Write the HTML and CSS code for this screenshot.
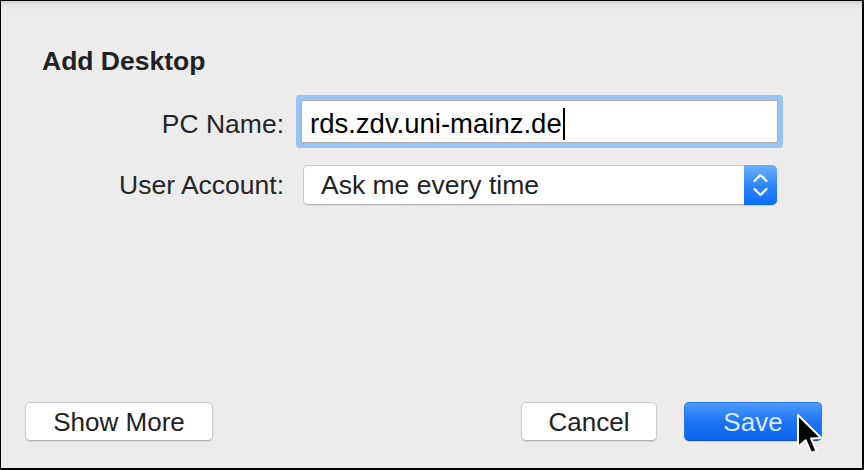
FILE: index.html
```html
<!DOCTYPE html>
<html lang="en">
<head>
    <meta charset="UTF-8">
    <title>Add Desktop</title>
    <link rel="stylesheet" href="styles.css">
</head>
<body>
    <div class="window">
        <h1 class="title">Add Desktop</h1>

        <div class="row row-name">
            <label class="label">PC Name:</label>
            <div class="field">rds.zdv.uni-mainz.de<span class="caret"></span></div>
        </div>

        <div class="row row-account">
            <label class="label">User Account:</label>
            <div class="select">
                <span class="select-text">Ask me every time</span>
                <span class="select-arrows">
                    <svg width="15" height="26" viewBox="0 0 15 26">
                        <path d="M1.5 9 L7.5 3 L13.5 9" fill="none" stroke="#fff" stroke-width="2.2" stroke-linecap="round" stroke-linejoin="round"/>
                        <path d="M1.5 17 L7.5 23 L13.5 17" fill="none" stroke="#fff" stroke-width="2.2" stroke-linecap="round" stroke-linejoin="round"/>
                    </svg>
                </span>
            </div>
        </div>

        <div class="footer">
            <button class="btn btn-more">Show More</button>
            <div class="spacer"></div>
            <button class="btn btn-cancel">Cancel</button>
            <button class="btn btn-save">Save</button>
        </div>

        <!-- mouse pointer over the Save button -->
        <svg class="pointer" width="28" height="42" viewBox="-1 -1 14 21">
            <path d="M0 0 L0 16 L3.8 12.6 L6.6 19 L9.2 17.9 L6.5 11.7 L11.6 11.5 Z" fill="#000" stroke="#fff" stroke-width="1" stroke-linejoin="round"/>
        </svg>
    </div>
</body>
</html>
```

FILE: styles.css
```css
html, body {
    margin: 0;
    padding: 0;
    background: #ececec;
    font-family: "Liberation Sans", Arial, sans-serif;
}

.window {
    position: relative;
    box-sizing: border-box;
    width: 864px;
    height: 470px;
    border: 1px solid #000;
    border-right-width: 2px;
    border-bottom-width: 2px;
    background: linear-gradient(#d3d3d3 0, #e6e6e6 5px, #ececec 9px, #ececec 100%);
    display: flex;
    flex-direction: column;
    color: #232323;
}

.title {
    margin: 45px 0 0 41px;
    font-size: 26.5px;
    line-height: 30px;
    font-weight: bold;
    color: #222;
}

.row {
    display: flex;
    align-items: baseline;
}

.row-name {
    margin-top: 24px;
}

.row-account {
    margin-top: 22px;
}

.label {
    width: 283px;
    text-align: right;
    font-size: 26.5px;
    color: #252525;
}

.field {
    box-sizing: border-box;
    margin-left: 17px;
    width: 477px;
    height: 43px;
    padding: 4px 0 0 8px;
    line-height: 38px;
    font-size: 27.5px;
    color: #000;
    background: #fff;
    border: 1px solid #b0b0b0;
    border-radius: 1px;
    box-shadow: 0 0 0 5px #97c4f5;
    display: flex;
    align-items: center;
}

.caret {
    display: inline-block;
    width: 2px;
    height: 32px;
    margin-left: 1px;
    background: #000;
}

.select {
    box-sizing: border-box;
    margin-left: 19px;
    width: 474px;
    height: 40px;
    display: flex;
    align-items: stretch;
    background: #fff;
    border: 1px solid #c9c9c9;
    border-bottom-color: #b4b4b4;
    border-radius: 5px;
    box-shadow: 0 1px 1px rgba(0, 0, 0, 0.08);
}

.select-text {
    flex: 1;
    padding-left: 17px;
    font-size: 26.5px;
    line-height: 38px;
    color: #222;
}

.select-arrows {
    width: 33px;
    margin: -1px -1px -1px 0;
    border-radius: 0 5px 5px 0;
    background: linear-gradient(#6cb0fb, #2f87fc 50%, #0a6bff);
    display: flex;
    align-items: center;
    justify-content: center;
}

.footer {
    margin-top: auto;
    padding: 0 40px 27px 24px;
    display: flex;
}

.spacer {
    flex: 1;
}

.btn {
    box-sizing: border-box;
    height: 39px;
    border-radius: 5px;
    font-family: "Liberation Sans", Arial, sans-serif;
    font-size: 26px;
    padding: 2px 0 0;
    background: #fff;
    color: #222;
    border: 1px solid #cbcbcb;
    border-bottom-color: #b2b2b2;
    box-shadow: 0 1px 1px rgba(0, 0, 0, 0.1);
}

.btn-more {
    width: 188px;
}

.btn-cancel {
    width: 136px;
}

.btn-save {
    width: 138px;
    margin-left: 27px;
    color: #dde9fb;
    background: linear-gradient(#4d9bf8, #1d74f5 50%, #0d63f0);
    border-color: #2a75e8;
    border-bottom-color: #0a52c8;
}

.pointer {
    position: absolute;
    left: 795px;
    top: 412px;
}
```
